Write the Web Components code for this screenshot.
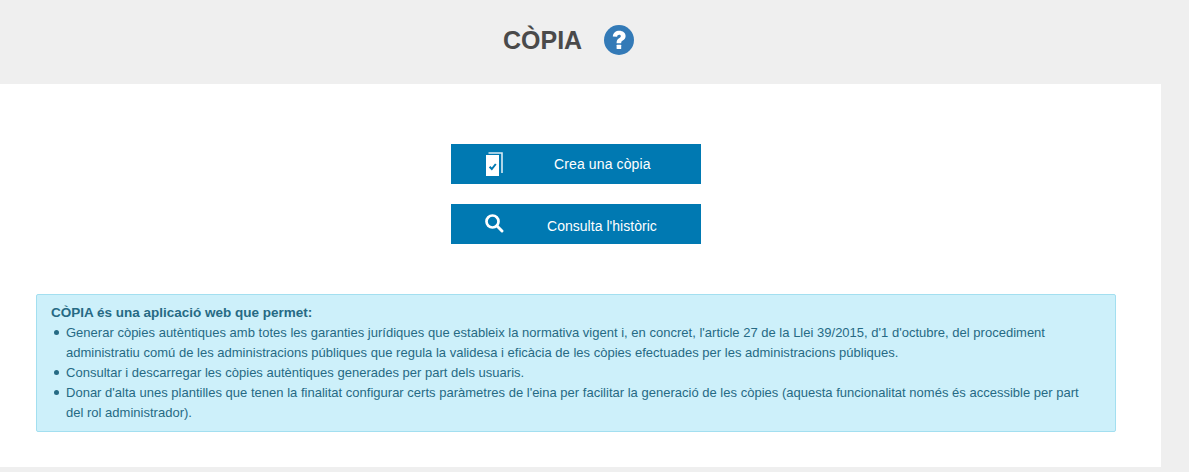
<!DOCTYPE html>
<html lang="ca"><head><meta charset="utf-8"><title>CÒPIA</title>
<style>
html,body{margin:0;height:472px;overflow:hidden;background:#efefef;font-family:"Liberation Sans",Arial,sans-serif}
</style></head><body>
<app-page>
<page-header slot="header" title-text="CÒPIA"></page-header>
<action-button icon="copy">Crea una còpia</action-button>
<action-button icon="search">Consulta l'històric</action-button>
<info-box slot="info" heading="CÒPIA és una aplicació web que permet:">
<li>Generar còpies autèntiques amb totes les garanties jurídiques que estableix la normativa vigent i, en concret, l'article 27 de la Llei 39/2015, d'1 d'octubre, del procediment administratiu comú de les administracions públiques que regula la validesa i eficàcia de les còpies efectuades per les administracions públiques.</li>
<li>Consultar i descarregar les còpies autèntiques generades per part dels usuaris.</li>
<li>Donar d'alta unes plantilles que tenen la finalitat configurar certs paràmetres de l'eina per facilitar la generació de les còpies (aquesta funcionalitat només és accessible per part del rol administrador).</li>
</info-box>
</app-page>
<script>
class AppPage extends HTMLElement{constructor(){super();this.attachShadow({mode:'open'}).innerHTML=`<style>
:host{display:block}
main{width:1161px;height:383px;box-sizing:border-box;background:#fff;padding:60px 45px 0 36px}
.actions{display:flex;flex-direction:column;align-items:center;gap:20px;width:1080px}
.info{margin-top:50px}
</style><slot name="header"></slot><main><div class="actions"><slot></slot></div><div class="info"><slot name="info"></slot></div></main>`}}
class PageHeader extends HTMLElement{constructor(){super();this.attachShadow({mode:'open'}).innerHTML=`<style>
:host{display:flex;height:84px;box-sizing:border-box;padding-left:503px;padding-bottom:4px;align-items:center;gap:22px;background:#efefef}
h1{margin:0;font:700 25px/30px "Liberation Sans",Arial,sans-serif;color:#4a4a4a}
svg{display:block;width:30px;height:30px}
</style><h1>${this.getAttribute('title-text')}</h1>
<svg viewBox="0 0 30 30" aria-hidden="true"><circle cx="15" cy="15" r="15" fill="#337ab7"/><path d="M8.800 11.400C9.200 7.800 11.800 5.800 15.300 5.800c3.600 0 6.300 2.100 6.300 5.300 0 2.300-1.200 3.500-2.800 4.500-1.200.8-1.600 1.200-1.600 2.400v.3h-4.600v-.8c0-2.100.8-3.200 2.500-4.300 1.100-.7 1.700-1.100 1.700-2 0-.9-.7-1.400-1.700-1.400-1.100 0-1.800.7-2 1.900z" fill="#fff"/><rect x="12.600" y="19.700" width="4.600" height="4.300" rx=".5" fill="#fff"/></svg>`}}
const ICONS={copy:`<svg width="19" height="24" viewBox="0 0 19 24" aria-hidden="true"><path d="M3.500 1h13.500v20" fill="none" stroke="#fff" stroke-opacity=".85" stroke-width="1.600"/><rect x="1" y="3" width="13" height="21" fill="#fff"/><path d="M4.600 14.700l2.200 2.300 4-5" fill="none" stroke="#0079b2" stroke-width="2"/></svg>`,
search:`<svg width="19" height="19" viewBox="0 0 19 19" aria-hidden="true"><circle cx="7.500" cy="7.500" r="6" fill="none" stroke="#fff" stroke-width="2.700"/><path d="M11.800 11.800l5.200 5.200" stroke="#fff" stroke-width="2.900" stroke-linecap="round"/></svg>`};
class ActionButton extends HTMLElement{constructor(){super();const k=this.getAttribute('icon');this.attachShadow({mode:'open'}).innerHTML=`<style>
:host{display:block;width:250px;height:40px;background:#0079b2;color:#fff;font:14px/20px "Liberation Sans",Arial,sans-serif;letter-spacing:.12px;cursor:pointer}
.row{display:flex;height:100%;align-items:center;box-sizing:border-box}
.icon{width:103px;flex:none;display:flex;box-sizing:border-box;padding-left:34px;justify-content:flex-start}
.icon svg{display:block}
.search .icon{margin-top:-2px}
.label{white-space:nowrap}
.search .label{margin-left:-7px;margin-top:4px;letter-spacing:.03px}
</style><div class="row ${k}"><span class="icon">${ICONS[k]}</span><span class="label"><slot></slot></span></div>`}}
class InfoBox extends HTMLElement{constructor(){super();const r=this.attachShadow({mode:'open'});const lis=[...this.querySelectorAll('li')].map(l=>`<li>${l.innerHTML}</li>`).join('');r.innerHTML=`<style>
:host{display:block;width:1080px;height:138px;box-sizing:border-box;background:#cdf0fa;border:1px solid #a3dff0;border-radius:2px;padding:8px 14px;color:#266a84;font:13px/20px "Liberation Sans",Arial,sans-serif}
strong{display:block;font-size:13.500px;line-height:20px}
ul{margin:0;padding:0 10px 0 15px;list-style:none}
li{margin:0;padding:0;letter-spacing:.01px}
li::before{content:"";display:inline-block;width:5px;height:5px;border-radius:50%;background:#266a84;margin-left:-12px;margin-right:7px;vertical-align:2px}
</style><strong>${this.getAttribute('heading')}</strong><ul>${lis}</ul>`;this.textContent=''}}
customElements.define('app-page',AppPage);customElements.define('page-header',PageHeader);customElements.define('action-button',ActionButton);customElements.define('info-box',InfoBox);
</script></body></html>
